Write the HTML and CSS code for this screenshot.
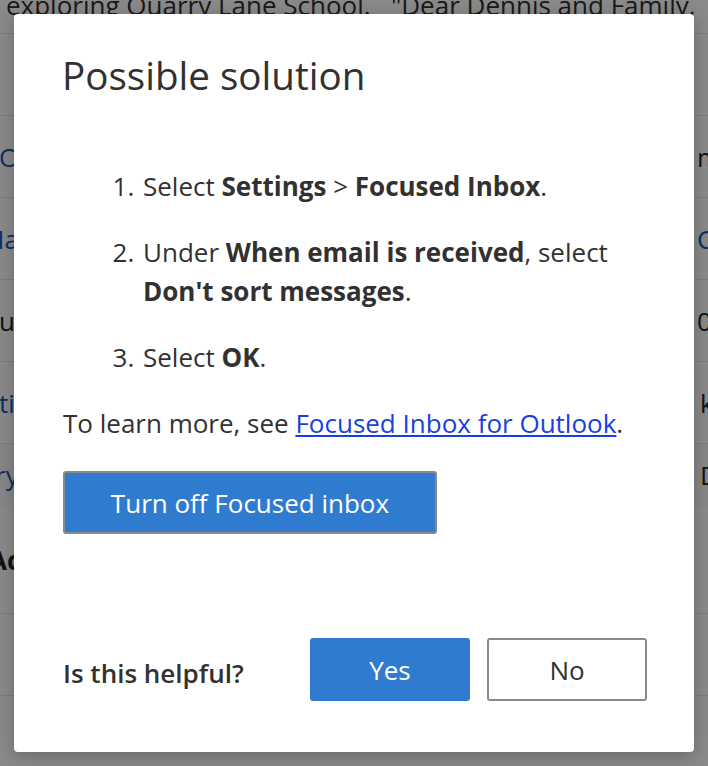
FILE: index.html
```html
<!DOCTYPE html>
<html lang="en">
<head>
<meta charset="utf-8">
<title>Possible solution</title>
<link rel="stylesheet" href="styles.css">
</head>
<body>
<div class="page">
  <div class="list">
    <div class="row top"><span class="topline">exploring Quarry Lane School.&nbsp;&nbsp; "Dear Dennis and Family,</span></div>
    <div class="row"></div>
    <div class="row"><span class="l blue o1">Oli</span><span class="r dark">me</span></div>
    <div class="row"><span class="l blue o2">Ma</span><span class="r blue">Co</span></div>
    <div class="row"><span class="l dark o3">u</span><span class="r dark">0</span></div>
    <div class="row"><span class="l blue o3">ti</span><span class="r dark rk">k</span></div>
    <div class="row sel"><span class="l blue o5">ry</span><span class="r dark rk">D</span></div>
    <div class="row tall"><span class="l dark bold o6">Ac</span><span class="r dark"></span></div>
    <div class="row"></div>
  </div>
  <div class="overlay"></div>
  <div class="dialog" role="dialog" aria-labelledby="dlg-title">
    <h1 id="dlg-title" class="title">Possible solution</h1>
    <ol class="steps">
      <li>Select <b>Settings</b> &gt; <b>Focused Inbox</b>.</li>
      <li>Under <b>When email is received</b>, select <b>Don't sort messages</b>.</li>
      <li>Select <b>OK</b>.</li>
    </ol>
    <p class="more">To learn more, see <a href="#">Focused Inbox for Outlook</a>.</p>
    <button class="btn primary big" type="button">Turn off Focused inbox</button>
    <div class="footer">
      <span class="ask">Is this helpful?</span>
      <div class="actions">
        <button class="btn primary small" type="button">Yes</button>
        <button class="btn secondary small" type="button">No</button>
      </div>
    </div>
  </div>
</div>
</body>
</html>
```
FILE: styles.css
```css
* { box-sizing: border-box; }
html, body { margin: 0; padding: 0; }
body {
  width: 708px;
  height: 766px;
  overflow: hidden;
  background: #fff;
  font-family: "Open Sans", "Noto Sans", sans-serif;
  color: #323130;
}
.page { position: relative; width: 708px; height: 766px; overflow: hidden; }

.list { display: flex; flex-direction: column; font-size: 26px; }
.row {
  flex: 0 0 auto;
  height: 82px;
  display: flex;
  align-items: center;
  justify-content: space-between;
  border-bottom: 1px solid #e6e6e6;
  white-space: nowrap;
}
.row.top { height: 34px; align-items: flex-end; overflow: hidden; }
.topline { display: block; margin-left: 6px; line-height: 26px; margin-bottom: 15px; }
.row.sel { height: 62px; background: #fafafa; border-bottom: none; }
.row.tall { height: 108px; }
.o1 { margin-left: -1px; }
.o2 { margin-left: -19px; }
.o3 { margin-left: -1px; }
.o5 { margin-left: -5px; }
.o6 { margin-left: -11px; }
.r { margin-right: -30px; width: 41px; overflow: hidden; }
.rk { padding-left: 3px; }
.blue { color: #0f5cb8; }
.dark { color: #252423; }
.bold { font-weight: 700; }

.overlay { position: absolute; inset: 0; background: rgba(0, 0, 0, 0.46); }

.dialog {
  position: absolute;
  left: 14px;
  top: 14px;
  width: 680px;
  height: 738px;
  background: #fff;
  border-radius: 4px;
  box-shadow: 0 4px 18px rgba(0, 0, 0, 0.25);
  padding: 37px 48px 51px 49px;
  display: flex;
  flex-direction: column;
  align-items: flex-start;
  font-size: 26px;
  color: #323130;
}
.title { margin: 0 0 0 -1px; font-size: 38.6px; font-weight: 400; line-height: 48px; color: #323130; }
.steps { margin: 68px 0 0 0; padding-left: 78px; }
.steps li { line-height: 39px; margin-bottom: 27px; padding-left: 2px; }
.steps li:last-child { margin-bottom: 0; }
.steps b { font-weight: 700; }
.more { margin: 27px 0 0 0; line-height: 39px; }
.more a { color: #1a3fe0; text-decoration: underline; }

.btn {
  font-family: inherit;
  font-size: 26px;
  border-radius: 3px;
  cursor: pointer;
  padding: 0;
}
.primary { background: #2f7bcf; color: #fff; border: 2px solid #2f7bcf; }
.big { margin-top: 28px; width: 374px; height: 63px; border-color: #8a8a8a; }
.small { width: 160px; height: 63px; }
.secondary { background: #fff; color: #323130; border: 2px solid #8a8a8a; }

.footer {
  margin-top: auto;
  width: 100%;
  display: flex;
  align-items: center;
  justify-content: space-between;
}
.ask { padding-top: 7px; font-weight: 550; }
.actions { display: flex; gap: 17px; margin-right: -1px; }
```
